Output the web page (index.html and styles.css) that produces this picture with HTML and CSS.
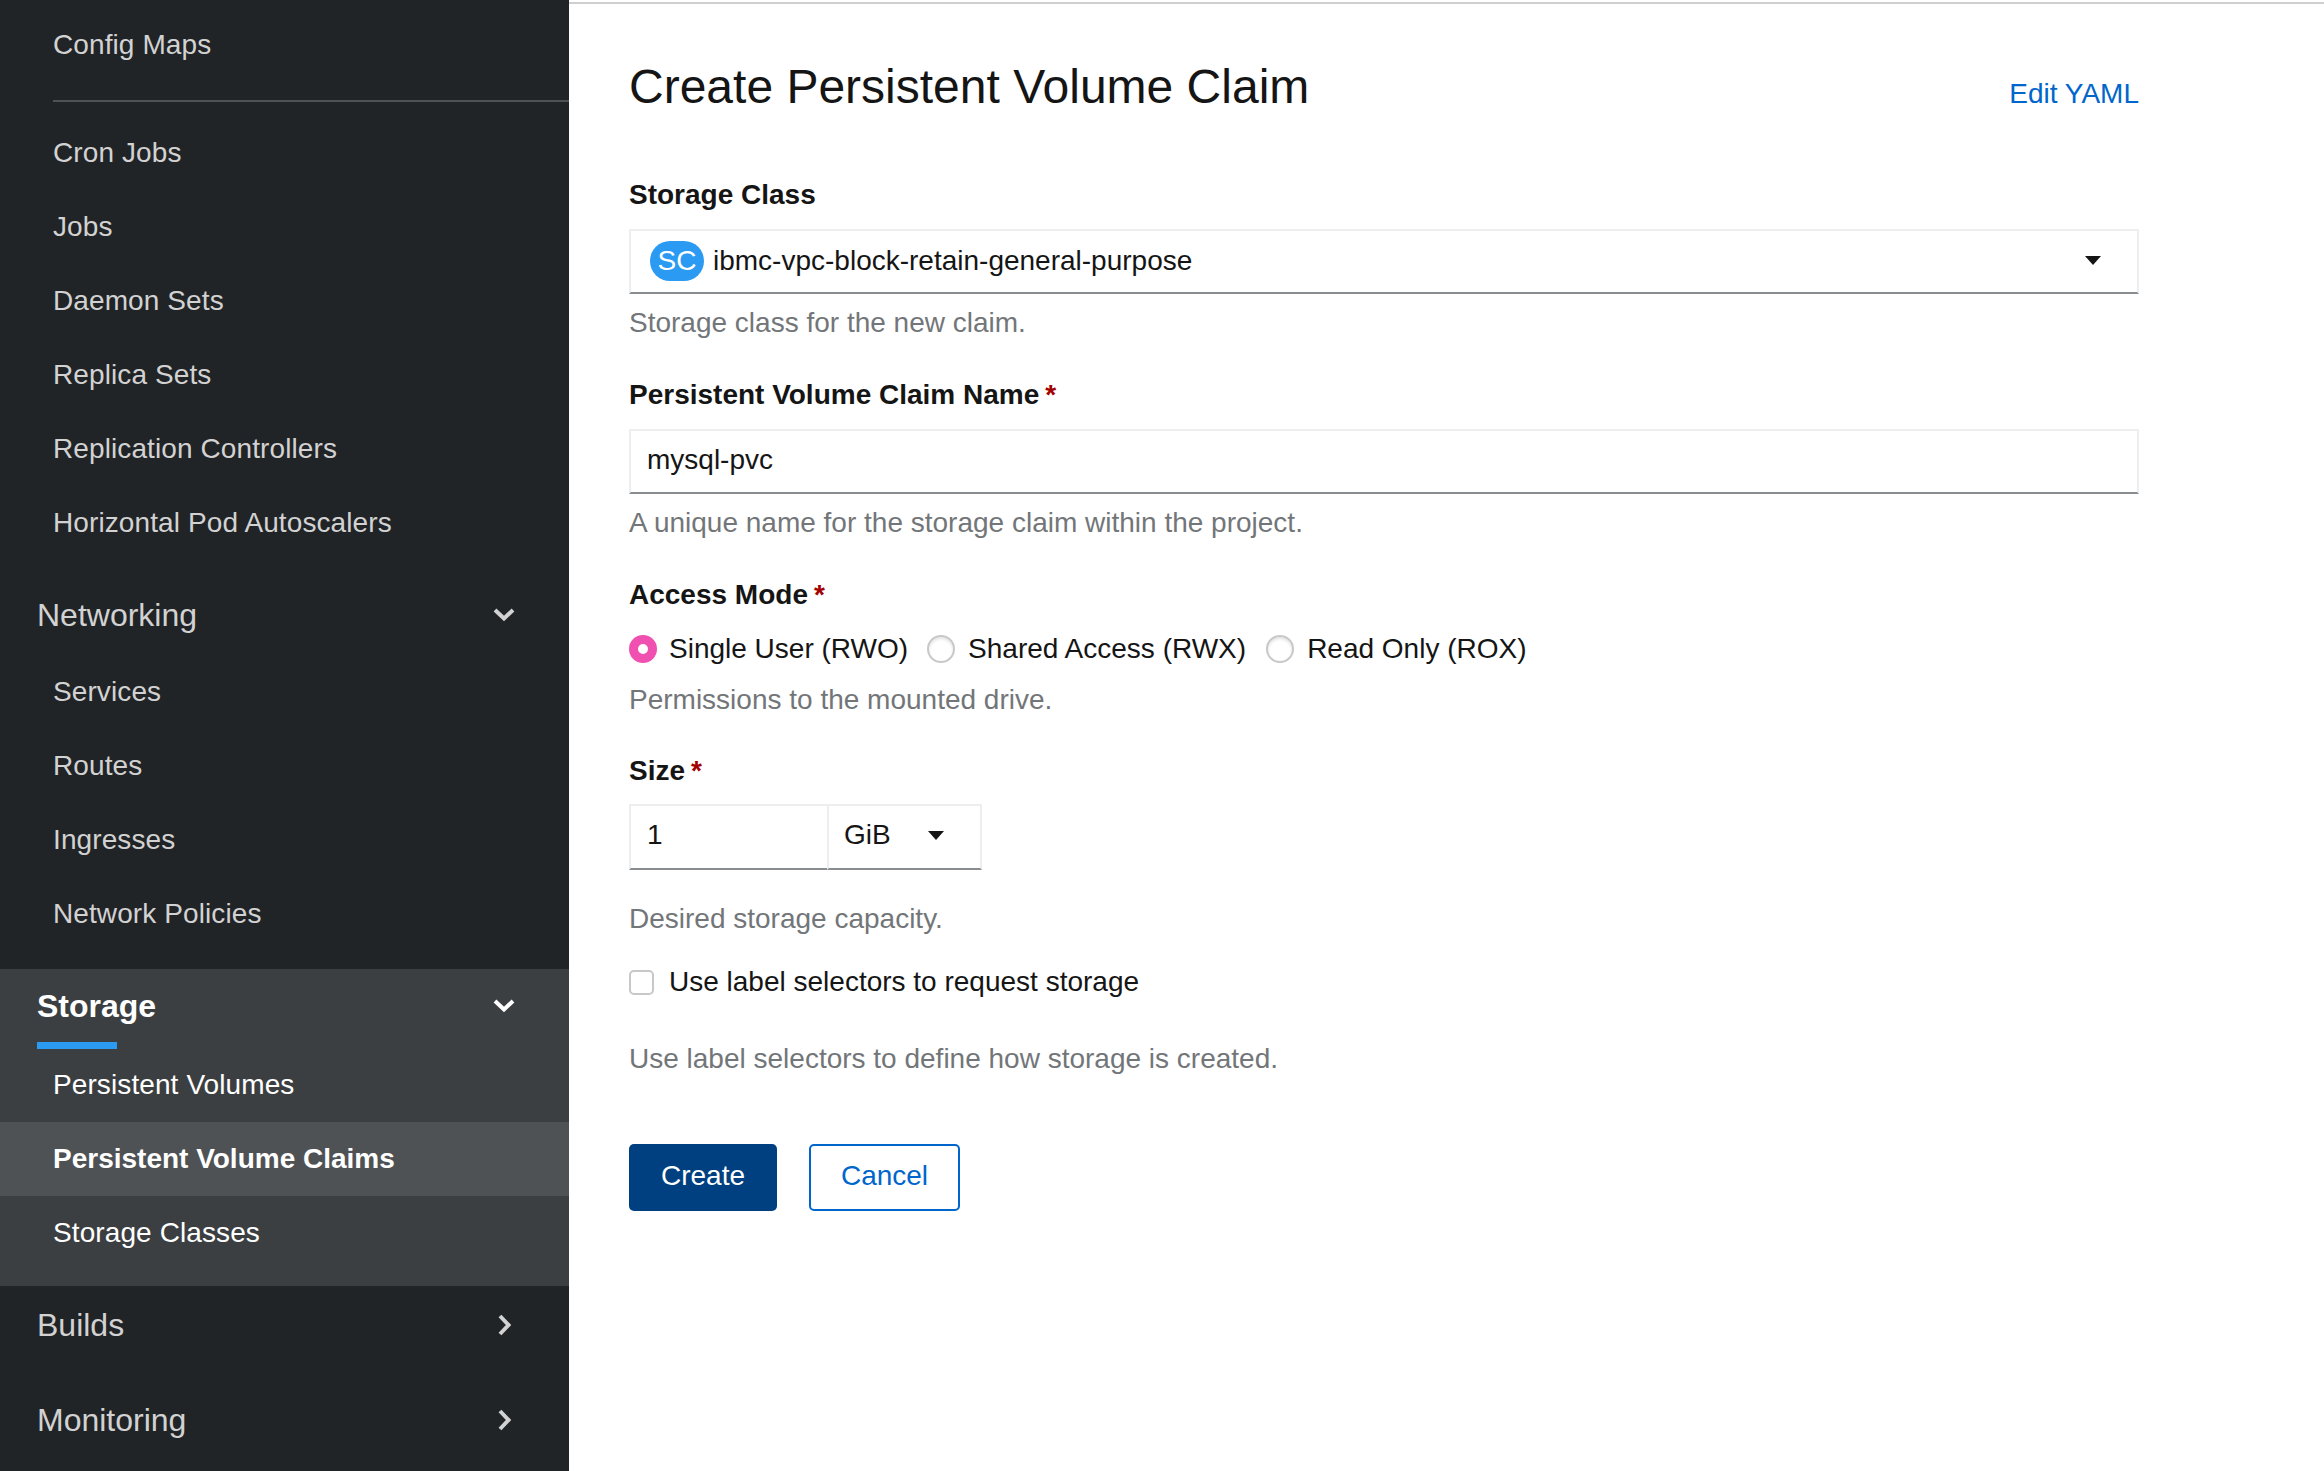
FILE: index.html
```html
<!DOCTYPE html>
<html>
<head>
    <title>Create Persistent Volume Claim</title>
    <meta charset="utf-8">
    <link rel="stylesheet" href="styles.css">
</head>
<body>
<div class="page">
    <nav class="sidebar">
        <a class="nav-item">Config Maps</a>
        <div class="nav-sep"></div>
        <a class="nav-item">Cron Jobs</a>
        <a class="nav-item">Jobs</a>
        <a class="nav-item">Daemon Sets</a>
        <a class="nav-item">Replica Sets</a>
        <a class="nav-item">Replication Controllers</a>
        <a class="nav-item">Horizontal Pod Autoscalers</a>

        <div class="nav-group">
            <div class="nav-head">
                <span>Networking</span>
                <svg class="chev" width="24" height="20" viewBox="0 0 24 20"><path d="M3 4l9 8.5 9-8.5" /></svg>
            </div>
            <a class="nav-item">Services</a>
            <a class="nav-item">Routes</a>
            <a class="nav-item">Ingresses</a>
            <a class="nav-item">Network Policies</a>
        </div>

        <div class="nav-group nav-group-open">
            <div class="nav-head">
                <span class="nav-head-active">Storage</span>
                <svg class="chev" width="24" height="20" viewBox="0 0 24 20"><path d="M3 5l9 8.5 9-8.5" /></svg>
            </div>
            <a class="nav-item">Persistent Volumes</a>
            <a class="nav-item nav-item-active">Persistent Volume Claims</a>
            <a class="nav-item">Storage Classes</a>
        </div>

        <div class="nav-group nav-group-closed">
            <div class="nav-head">
                <span>Builds</span>
                <svg class="chev" width="24" height="24" viewBox="0 0 24 24"><path d="M8 3l8.5 9-8.5 9" /></svg>
            </div>
        </div>
        <div class="nav-group nav-group-closed">
            <div class="nav-head">
                <span>Monitoring</span>
                <svg class="chev" width="24" height="24" viewBox="0 0 24 24"><path d="M8 3l8.5 9-8.5 9" /></svg>
            </div>
        </div>
    </nav>

    <main class="main">
        <div class="title-row">
            <h1>Create Persistent Volume Claim</h1>
            <a class="link">Edit YAML</a>
        </div>

        <div class="field field-gap">
            <label class="label">Storage Class</label>
            <div class="box box-select">
                <span class="badge">SC</span>
                <span class="box-text">ibmc-vpc-block-retain-general-purpose</span>
                <span class="caret"></span>
            </div>
            <p class="help">Storage class for the new claim.</p>
        </div>

        <div class="field field-gap">
            <label class="label">Persistent Volume Claim Name<span class="req">*</span></label>
            <div class="box">
                <span class="box-text">mysql-pvc</span>
            </div>
            <p class="help">A unique name for the storage claim within the project.</p>
        </div>

        <div class="field">
            <label class="label">Access Mode<span class="req">*</span></label>
            <div class="radios">
                <span class="radio radio-on"></span><span class="radio-label">Single User (RWO)</span>
                <span class="radio"></span><span class="radio-label">Shared Access (RWX)</span>
                <span class="radio"></span><span class="radio-label">Read Only (ROX)</span>
            </div>
            <p class="help">Permissions to the mounted drive.</p>
        </div>

        <div class="field">
            <label class="label">Size<span class="req">*</span></label>
            <div class="size-row">
                <div class="box size-num"><span class="box-text">1</span></div>
                <div class="box size-unit"><span class="box-text">GiB</span><span class="caret"></span></div>
            </div>
            <p class="help help-size">Desired storage capacity.</p>
        </div>

        <div class="check-row">
            <span class="checkbox"></span>
            <span class="check-label">Use label selectors to request storage</span>
        </div>
        <p class="help help-check">Use label selectors to define how storage is created.</p>

        <div class="actions">
            <button class="btn btn-primary">Create</button>
            <button class="btn btn-secondary">Cancel</button>
        </div>
    </main>
</div>
</body>
</html>
```

FILE: styles.css
```css
html,body{
    padding: 0;
    margin: 0;
    height: 100%;
    overflow: hidden;
    background: #fff;
    font-family: "Liberation Sans", Arial, sans-serif;
}

.page{
    display: flex;
    height: 1471px;
}

/* sidebar */
.sidebar{
    width: 569px;
    flex: none;
    box-sizing: border-box;
    padding-top: 8px;
    background: #212427;
    color: #d2d2d2;
    overflow: hidden;
}

.nav-item{
    display: flex;
    align-items: center;
    height: 74px;
    padding-left: 53px;
    font-size: 28px;
    letter-spacing: 0.1px;
}

.nav-sep{
    height: 2px;
    margin: 18px 0 14px 53px;
    background: #4f5255;
}

.nav-group{
    margin-top: 16px;
}

.nav-head{
    display: flex;
    align-items: center;
    justify-content: space-between;
    height: 79px;
    padding: 0 53px 0 37px;
    font-size: 32px;
}

.chev{
    fill: none;
    stroke: currentColor;
    stroke-width: 4;
}

.nav-group-open{
    margin-top: 18px;
    padding-bottom: 16px;
    background: #3c3f42;
    color: #fff;
}

.nav-group-open .nav-head{
    height: 79px;
    padding-bottom: 5px;
    box-sizing: border-box;
    position: relative;
}

.nav-head-active{
    font-weight: bold;
}

.nav-head-active:after{
    content: "";
    position: absolute;
    left: 37px;
    bottom: -1px;
    width: 80px;
    height: 7px;
    background: #2b9af3;
}

.nav-item-active{
    background: #4f5255;
    font-weight: bold;
    letter-spacing: 0;
}

.nav-group-closed{
    margin-top: 0;
    margin-bottom: 17px;
}

.nav-group-closed .nav-head{
    height: 78px;
}

/* form */
.main{
    flex: 1;
    box-sizing: border-box;
    margin-top: 2px;
    padding: 0 185px 0 60px;
    border-top: 2px solid #cfcfcf;
    color: #151515;
}

.title-row{
    display: flex;
    justify-content: space-between;
    height: 159px;
}

h1{
    margin: 50px 0 0;
    font-size: 48px;
    line-height: 66px;
    font-weight: normal;
}

.link{
    margin-top: 60px;
    font-size: 28px;
    line-height: 60px;
    color: #06c;
}

.field{
    margin-bottom: 10px;
}

.field-gap{
    margin-bottom: 11px;
}

.label{
    display: block;
    height: 66px;
    font-size: 28px;
    line-height: 64px;
    font-weight: bold;
}

.req{
    margin-left: 6px;
    color: #a30000;
}

.box{
    display: flex;
    align-items: center;
    box-sizing: border-box;
    height: 65px;
    padding: 0 16px 4px;
    border: 2px solid #eee;
    border-bottom: 2px solid #8a8d90;
    font-size: 28px;
}

.box-select{
    padding: 0 36px 2px 19px;
}

.box-text{
    flex: 1;
}

.badge{
    display: inline-flex;
    align-items: center;
    justify-content: center;
    width: 54px;
    height: 40px;
    margin-right: 9px;
    border-radius: 20px;
    background: #2b9af3;
    color: #fff;
    font-size: 28px;
}

.caret{
    width: 0;
    height: 0;
    border-left: 8px solid transparent;
    border-right: 8px solid transparent;
    border-top: 9px solid #151515;
}

.help{
    margin: 0;
    height: 58px;
    font-size: 28px;
    line-height: 58px;
    color: #737679;
}

.radios{
    display: flex;
    align-items: center;
    height: 45px;
    margin-top: -3px;
    font-size: 28px;
}

.radio{
    flex: none;
    box-sizing: border-box;
    width: 28px;
    height: 28px;
    border-radius: 50%;
    border: 2px solid #c8c8c8;
    box-shadow: inset 0 2px 3px #e4e4e4;
}

.radio-on{
    border: 9px solid #f050b0;
    background: #fff;
    box-shadow: none;
}

.radio-label{
    margin: 0 20px 0 13px;
}

.radio-on + .radio-label{
    margin: 0 19px 0 12px;
}

.size-row{
    display: flex;
    margin-top: -1px;
}

.size-row .box{
    height: 66px;
}

.size-num{
    width: 198px;
    border-right: 0;
}

.size-unit{
    width: 155px;
    padding: 0 36px 4px 15px;
}

.help-size{
    margin-top: 20px;
}

.check-row{
    display: flex;
    align-items: center;
    height: 60px;
    margin-top: -6px;
    font-size: 28px;
}

.checkbox{
    box-sizing: border-box;
    width: 25px;
    height: 25px;
    margin-right: 15px;
    border: 2px solid #c8c8c8;
    border-radius: 5px;
    background: #fff;
}

.help-check{
    margin-top: 18px;
}

.actions{
    display: flex;
    gap: 32px;
    margin-top: 56px;
}

.btn{
    box-sizing: border-box;
    height: 67px;
    padding: 0 0 4px;
    border-radius: 5px;
    font-family: inherit;
    font-size: 28px;
}

.btn-primary{
    width: 148px;
    border: 0;
    background: #004080;
    color: #fff;
}

.btn-secondary{
    width: 151px;
    border: 2px solid #06c;
    background: #fff;
    color: #06c;
}
```
